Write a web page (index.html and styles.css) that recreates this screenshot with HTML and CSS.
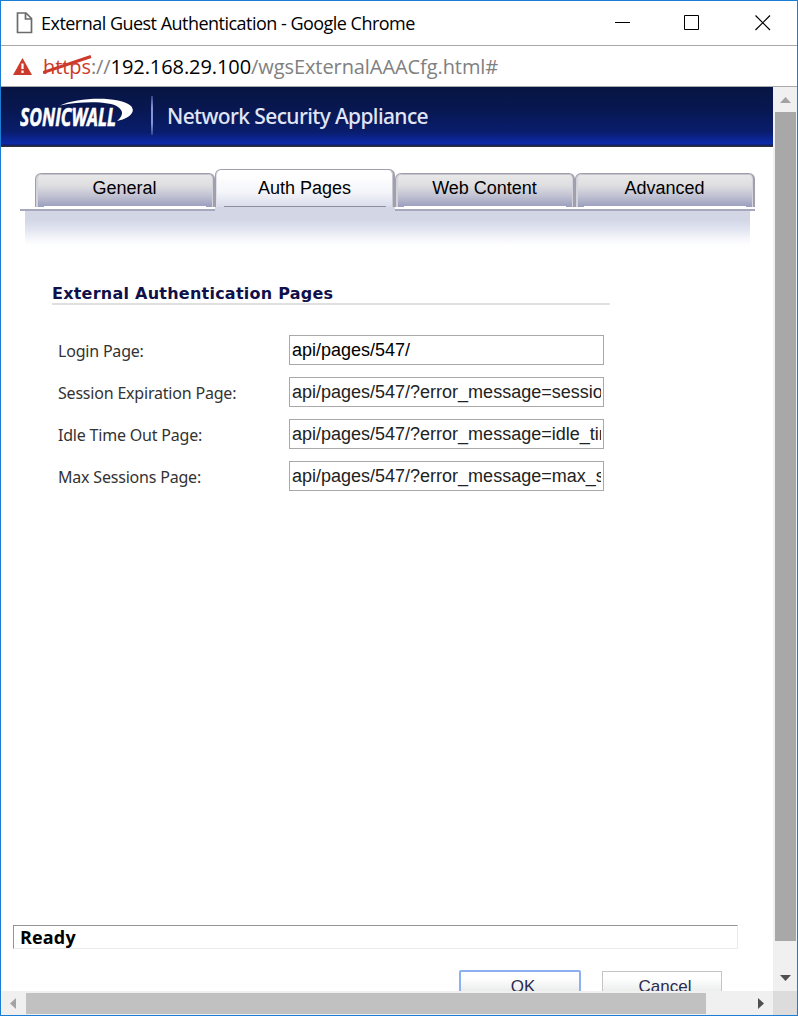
FILE: index.html
```html
<!DOCTYPE html>
<html lang="en">
<head>
<meta charset="utf-8">
<title>External Guest Authentication</title>
<link rel="stylesheet" href="styles.css">
</head>
<body>
<div class="window">
  <header class="titlebar">
    <svg class="page-icon" width="18" height="22" viewBox="0 0 18 22"><path d="M2.500 1H11L16.500 6.500V20.500H2.500Z M10.500 1V7H16.500" fill="#fff" stroke="#6b6b6b" stroke-width="1.700"/></svg>
    <span class="title">External Guest Authentication - Google Chrome</span>
    <svg class="controls" width="156" height="16" viewBox="0 0 156 16"><path d="M0 7.500H15M69.500.5H83.500V14.500H69.500Z" fill="none" stroke="#000"/><path d="M140.500.5L155 15M155 .5L140.500 15" stroke="#000" stroke-width="1.200"/></svg>
  </header>
  <div class="address">
    <svg class="warn" width="19" height="17" viewBox="0 0 19 17"><path d="M9.500 0L19 17H0Z" fill="#cb3a2b"/><path d="M9.500 5.500V11M9.500 12.500V15" stroke="#fff" stroke-width="2.200"/></svg>
    <span class="url"><span class="scheme">https<svg class="strike" width="49" height="19" viewBox="0 0 49 19"><path d="M0 17.500L48 1.500" stroke="#cb3a2b" stroke-width="3"/></svg></span>://<span class="host">192.168.29.100</span>/wgsExternalAAACfg.html#</span>
  </div>
  <div class="body">
    <main class="page">
      <div class="brand">
        <svg class="logo" width="115" height="36" viewBox="0 0 115 36"><text class="logo-text" x="0" y="30" textLength="96" lengthAdjust="spacingAndGlyphs">SONICWALL</text><path d="M40 9.500C58 1 100 0 111 10C117 17 107 23 97 25C103 20 104 15 98 11C90 5 62 5 40 9.500Z" fill="#fff"/></svg>
        <span class="divider"></span>
        <span class="product">Network Security Appliance</span>
      </div>
      <nav class="tabs">
        <a class="tab"><span class="face">General</span></a>
        <a class="tab active"><span class="face">Auth Pages</span></a>
        <a class="tab"><span class="face">Web Content</span></a>
        <a class="tab"><span class="face">Advanced</span></a>
      </nav>
      <div class="shade"></div>
      <section class="form">
        <h1 class="heading">External Authentication Pages</h1>
        <div class="row"><label class="label">Login Page:</label><div class="field"><div class="value dark">api/pages/547/</div></div></div>
        <div class="row"><label class="label">Session Expiration Page:</label><div class="field"><div class="value">api/pages/547/?error_message=session_expired</div></div></div>
        <div class="row"><label class="label">Idle Time Out Page:</label><div class="field"><div class="value">api/pages/547/?error_message=idle_timeout</div></div></div>
        <div class="row"><label class="label">Max Sessions Page:</label><div class="field"><div class="value">api/pages/547/?error_message=max_sessions</div></div></div>
      </section>
      <div class="status">Ready</div>
      <div class="buttons"><button class="btn primary">OK</button><button class="btn">Cancel</button></div>
    </main>
    <div class="vbar"><svg width="11" height="6"><path d="M0 6L5.500 0L11 6Z" fill="#a3a3a3"/></svg><div class="vthumb"></div><svg class="down" width="11" height="6"><path d="M0 0L5.500 6L11 0Z" fill="#505050"/></svg></div>
    <div class="hbar"><svg width="6" height="11"><path d="M6 0L0 5.500L6 11Z" fill="#a3a3a3"/></svg><div class="hthumb"></div><svg class="right" width="6" height="11"><path d="M0 0L6 5.500L0 11Z" fill="#505050"/></svg></div>
    <div class="corner"></div>
  </div>
</div>
</body>
</html>
```
FILE: styles.css
```css
* { box-sizing: border-box; }
body { margin: 0; background: #fff; }
svg { display: block; flex: none; }
.window { width: 798px; height: 1016px; border: 1px solid #1a7fd4; overflow: hidden; background: #fff; }
.titlebar { height: 45px; border-bottom: 1px solid #a9a9a9; display: flex; align-items: center; padding-left: 14px; }
.title { margin-left: 8px; font: 18px/44px "Open Sans", "Noto Sans", sans-serif; letter-spacing: -0.52px; color: #000; white-space: nowrap; }
.controls { margin-left: auto; margin-right: 26px; }
.address { height: 41px; border-bottom: 1px solid #a9a9a9; display: flex; align-items: center; padding-left: 12px; }
.url { margin-left: 11px; padding-top: 2px; font: 20px/40px "Open Sans", "Noto Sans", sans-serif; letter-spacing: -0.08px; color: #808080; white-space: nowrap; }
.scheme { color: #cb3a2b; position: relative; }
.strike { position: absolute; left: 0; top: 2px; }
.host { color: #000; }
.body { display: grid; grid-template-columns: 772px 24px; grid-template-rows: 904px 24px; }
.page { overflow: hidden; background: #fff; display: flex; flex-direction: column; }
.brand { height: 60px; flex: none; display: flex; align-items: flex-start; padding: 9px 0 0 19px; background: linear-gradient(#071542 0, #081750 35%, #091d6c 75%, #0b2698 88%, #0d2ba8 95%, #0b1a60 97%, #302f3d 98%, #302f3d 100%); }
.logo-text { font: italic bold 25px "Open Sans", sans-serif; fill: #fff; stroke: #fff; stroke-width: .6px; }
.divider { width: 2px; height: 39px; background: linear-gradient(#33448c, #8694df 30%, #8694df 70%, #33448c); margin-left: 16px; }
.product { margin-left: 14px; font: 500 21px/40px "Noto Sans", sans-serif; letter-spacing: -0.62px; color: #e1e5f5; white-space: nowrap; }
.tabs { display: grid; grid-template-columns: repeat(4, 180px); height: 42px; margin: 22px 0 0 19px; padding-left: 15px; align-items: end; background: linear-gradient(#a6a8be, #a6a8be) left bottom / 735px 2px no-repeat; flex: none; }
.tab { height: 38px; padding-bottom: 4px; font: 18px/20px "Liberation Sans", Arial, sans-serif; color: #000; text-align: center; }
.face { display: block; height: 34px; border: solid #a09fab; border-width: 1px 2px 0 1px; border-radius: 6px 6px 0 0; padding-top: 4px; box-shadow: inset 2px 0 #d4d3dc, inset -1px 0 #d4d3dc, inset 0 1px #c4c3cc; background: linear-gradient(#fff, #fff) 8px 100% / 162px 1px no-repeat, linear-gradient(#e9e9e9, #dedee1 35%, #c2c3d3 65%, #9a9dbd); }
.tab.active { height: 42px; background: linear-gradient(#fff, #fff) top / 100% 10px no-repeat, #d3d6e5; }
.active .face { height: 38px; padding-top: 8px; background: linear-gradient(#8f8e9b, #8f8e9b) 8px 100% / 162px 1px no-repeat, linear-gradient(#fff 15%, #f4f5fa 60%, #d8dbea); box-shadow: inset 1px 0 #e0e0e8, inset -1px 0 #c8c7d1; }
.shade { height: 35px; width: 725px; margin-left: 24px; flex: none; background: linear-gradient(#d3d6e5 25%, #e0e3f0 50%, #f6f7fb 80%, #fff); }
.form { padding: 38px 0 0 51px; height: 679px; flex: none; }
.heading { margin: 0 0 30px; width: 558px; height: 21px; border-bottom: 2px solid #e0e0e0; font: bold 16px/20px "DejaVu Sans", sans-serif; letter-spacing: 0.24px; color: #10104a; white-space: nowrap; }
.row { display: flex; height: 42px; padding-left: 6px; }
.label { width: 231px; font: 16px/32px "Noto Sans", sans-serif; letter-spacing: -0.2px; color: #333; white-space: nowrap; }
.field { width: 315px; height: 30px; border: 1px solid #a9a9a9; padding: 0 2px; }
.value { overflow: hidden; font: 18px/28px "Liberation Sans", Arial, sans-serif; color: #222; white-space: nowrap; }
.value.dark { color: #000; }
.status { flex: none; width: 725px; height: 24px; margin-left: 12px; border: 1px solid #ebebeb; border-top-color: #949494; border-left-color: #949494; padding-left: 6px; font: bold 18px/23px "Open Sans", sans-serif; letter-spacing: .15px; color: #000; }
.buttons { flex: none; display: flex; padding: 21px 0 0 458px; align-items: flex-start; }
.btn { width: 120px; height: 33px; margin: 1px 0 0 21px; padding: 0 0 2px 6px; border: 1px solid #c4c4c4; background: linear-gradient(#fff 20%, #e3e5e5 80%); font: 17px/28px "Liberation Sans", Arial, sans-serif; color: #2b2b50; }
.btn.primary { width: 122px; height: 34px; margin: 0; border: 2px solid #8cb0f0; border-radius: 2px; padding-bottom: 0; }
.vbar { background: #f0f0f0; display: flex; flex-direction: column; align-items: center; padding-top: 10px; padding-left: 1px; }
.vthumb { width: 21px; height: 829px; margin-top: 9px; background: #a8a8a8; }
.down { margin-top: 34px; }
.hbar { background: #f0f0f0; display: flex; align-items: center; padding-left: 9px; }
.hthumb { width: 680px; height: 21px; margin: 1px 0 0 10px; background: #c1c1c1; }
.right { margin-left: 52px; }
.corner { background: #dcdcdc; }
```
